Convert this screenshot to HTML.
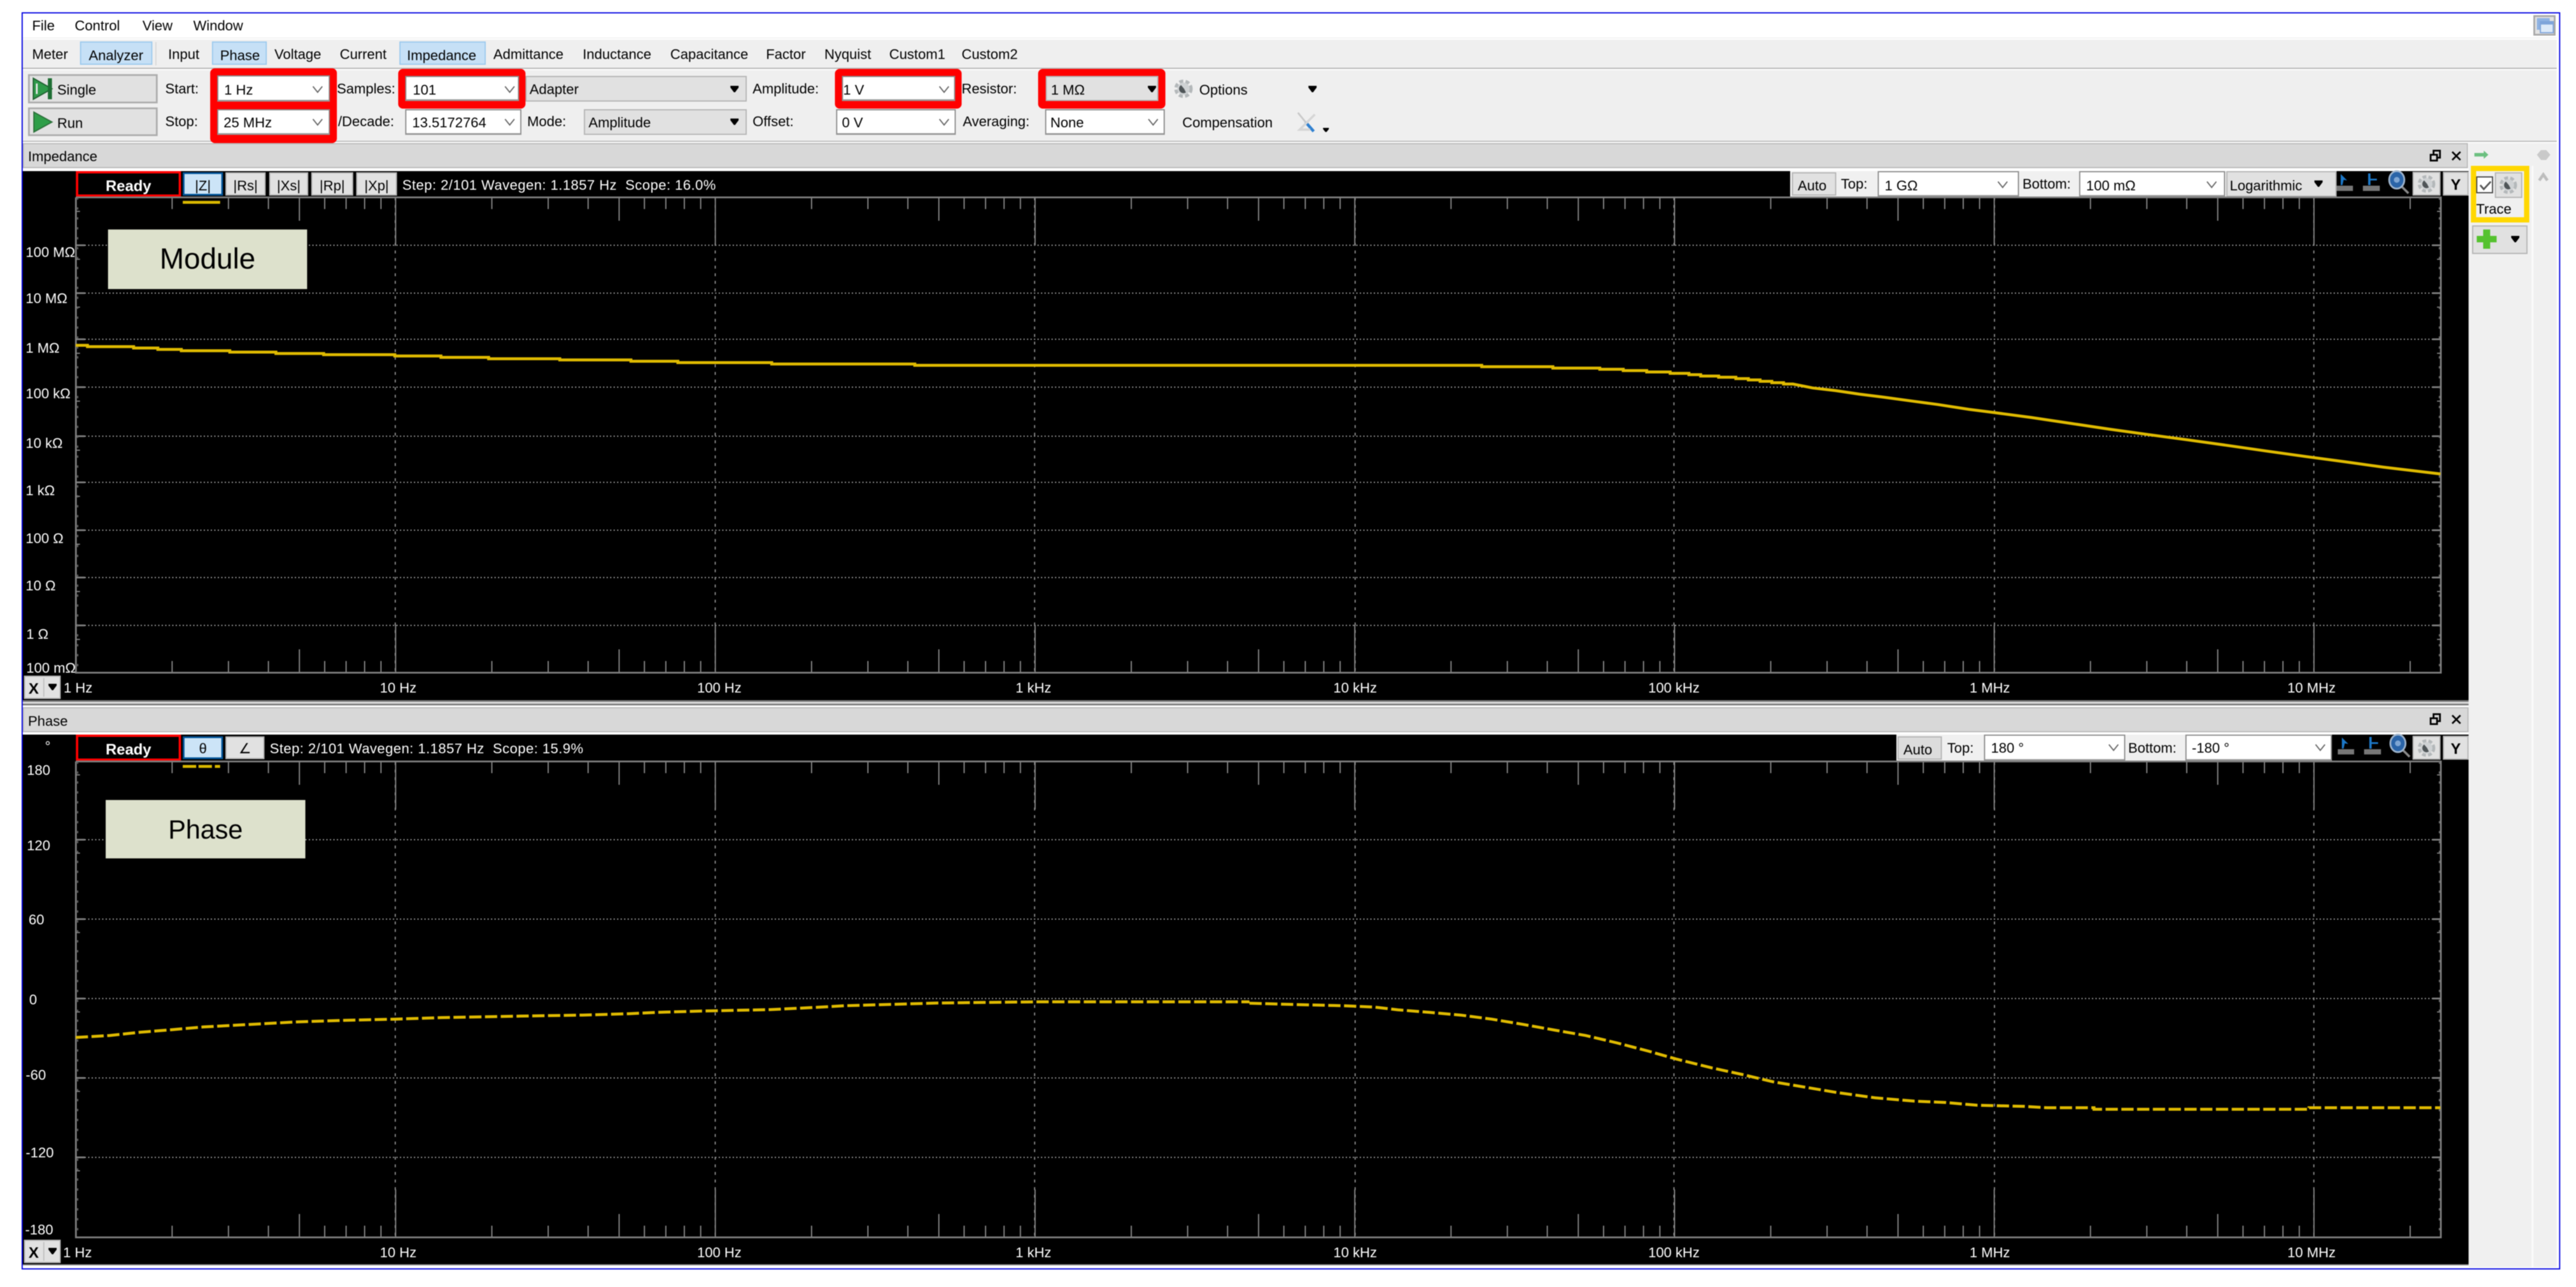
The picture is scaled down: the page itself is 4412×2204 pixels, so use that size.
<!DOCTYPE html>
<html><head><meta charset="utf-8"><title>Analyzer</title>
<style>
html,body{margin:0;padding:0;background:#fff}
#p{position:relative;width:4412px;height:2204px;overflow:hidden;background:#fff;font-family:"Liberation Sans","DejaVu Sans",sans-serif;filter:blur(.7px)}
#p div{position:absolute;box-sizing:border-box}
.t{position:absolute;white-space:pre;font:24px/30px "Liberation Sans","DejaVu Sans",sans-serif;color:#000}
.w{color:#fff}
.s{letter-spacing:.5px}
.xl{width:120px;text-align:center}
.c{background:#fff;border:2px solid #8b8b8b;border-bottom:3px solid #9a9a9a}
.d,.b{background:#e1e1e1;border:2px solid #b4b4b4}
.b3{background:#e1e1e1;border:3px solid #adadad}
.on{background:#c6e0f6;border:2px solid #9bc9ee}
.red{background:#f00;border-radius:8px}
svg{position:absolute;left:0;top:0}
</style></head><body><div id="p">

<!-- frame -->
<div style="left:37px;top:21px;width:4348px;height:2153px;border:2px solid #0000e0"></div>
<div style="left:39px;top:64px;width:4340px;height:2px;background:#f2f2f2"></div>
<div style="left:39px;top:68px;width:4340px;height:48px;background:#efefef"></div>
<div style="left:39px;top:116px;width:4340px;height:2px;background:#b5b5b5"></div>
<div style="left:39px;top:120px;width:4340px;height:121px;background:#efefef"></div>
<div style="left:39px;top:241px;width:4340px;height:2px;background:#bbb"></div>

<!-- right panel -->
<div style="left:4228px;top:245px;width:151px;height:1925px;background:#f0f0f0"></div>
<div style="left:4336px;top:284px;width:3px;height:1886px;background:#fafafa"></div>

<!-- dock titles -->
<div style="left:39px;top:245px;width:4188px;height:43px;background:#d8d8d8;border:2px solid #bababa"></div>
<div style="left:39px;top:1211px;width:4189px;height:43px;background:#d8d8d8;border:2px solid #bababa"></div>

<!-- black plots -->
<div style="left:39px;top:293px;width:4189px;height:906px;background:#000"></div>
<div style="left:39px;top:1199px;width:4189px;height:9px;background:#e0e0e0;border-top:3px solid #7b7b7b;border-bottom:3px solid #7b7b7b"></div>
<div style="left:39px;top:1258px;width:4189px;height:907px;background:#000"></div>
<div style="left:39px;top:2165px;width:4189px;height:2px;background:#888"></div>

<!-- tab buttons -->
<div class="on" style="left:137px;top:71px;width:124px;height:40px"></div>
<div style="left:266px;top:72px;width:2px;height:40px;background:#d8d8d8"></div>
<div class="on" style="left:363px;top:71px;width:94px;height:40px"></div>
<div class="on" style="left:684px;top:71px;width:148px;height:40px"></div>

<!-- toolbar controls -->
<div class="b3" style="left:48px;top:127px;width:222px;height:50px"></div>
<div class="b3" style="left:48px;top:184px;width:222px;height:49px"></div>
<div class="red" style="left:360px;top:117px;width:217px;height:128px"></div>
<div class="red" style="left:682px;top:118px;width:218px;height:68px"></div>
<div class="red" style="left:1430px;top:118px;width:217px;height:68px"></div>
<div class="red" style="left:1778px;top:118px;width:218px;height:68px"></div>
<div class="c" style="left:372px;top:129px;width:193px;height:45px"></div>
<div class="c" style="left:372px;top:187px;width:193px;height:44px"></div>
<div class="c" style="left:694px;top:130px;width:195px;height:43px"></div>
<div class="c" style="left:694px;top:187px;width:199px;height:44px"></div>
<div class="d" style="left:900px;top:130px;width:379px;height:44px"></div>
<div class="d" style="left:1000px;top:187px;width:279px;height:44px"></div>
<div class="c" style="left:1442px;top:130px;width:194px;height:43px"></div>
<div class="c" style="left:1432px;top:187px;width:205px;height:44px"></div>
<div class="d" style="left:1791px;top:130px;width:193px;height:43px"></div>
<div class="c" style="left:1790px;top:187px;width:205px;height:44px"></div>

<!-- plot 1 toolbar -->
<div style="left:130px;top:293px;width:180px;height:44px;background:#000;border:4px solid #f00"></div>
<div style="left:313px;top:295px;width:69px;height:40px;background:#cce4f7;border:3px solid #005499"></div>
<div class="b" style="left:386px;top:295px;width:69px;height:40px"></div>
<div class="b" style="left:461px;top:295px;width:67px;height:40px"></div>
<div class="b" style="left:533px;top:295px;width:72px;height:40px"></div>
<div class="b" style="left:610px;top:295px;width:70px;height:40px"></div>
<div style="left:3066px;top:293px;width:936px;height:44px;background:#f0f0f0"></div>
<div class="b" style="left:3069px;top:295px;width:76px;height:40px"></div>
<div class="c" style="left:3216px;top:293px;width:242px;height:44px"></div>
<div class="c" style="left:3561px;top:293px;width:250px;height:44px"></div>
<div class="d" style="left:3813px;top:293px;width:189px;height:44px"></div>
<div class="b" style="left:4132px;top:294px;width:48px;height:41px"></div>
<div class="b" style="left:4184px;top:294px;width:44px;height:41px"></div>

<!-- plot 2 toolbar -->
<div style="left:130px;top:1258px;width:180px;height:45px;background:#000;border:4px solid #f00"></div>
<div style="left:313px;top:1261px;width:69px;height:39px;background:#cce4f7;border:3px solid #005499"></div>
<div class="b" style="left:386px;top:1261px;width:67px;height:39px"></div>
<div style="left:3248px;top:1258px;width:746px;height:45px;background:#f0f0f0"></div>
<div class="b" style="left:3250px;top:1261px;width:76px;height:40px;background:#dcdcdc"></div>
<div class="c" style="left:3398px;top:1258px;width:242px;height:45px"></div>
<div class="c" style="left:3743px;top:1258px;width:251px;height:45px"></div>
<div class="b" style="left:4132px;top:1260px;width:48px;height:41px"></div>
<div class="b" style="left:4184px;top:1260px;width:44px;height:41px"></div>

<!-- X buttons -->
<div class="b" style="left:41px;top:1157px;width:63px;height:40px"></div>
<div class="b" style="left:41px;top:2123px;width:63px;height:40px"></div>

<!-- side panel boxes -->
<div style="left:4232px;top:284px;width:100px;height:97px;border:9px solid #ffd700;background:#f0f0f0"></div>
<div style="left:4241px;top:302px;width:29px;height:29px;background:#fff;border:2px solid #444"></div>
<div class="b" style="left:4273px;top:295px;width:47px;height:44px"></div>
<div class="b" style="left:4234px;top:386px;width:95px;height:49px"></div>
<div style="left:4339px;top:26px;width:38px;height:35px;background:#e2e2e2;border:3px solid #a8a8a8"></div>

<svg width="4412" height="2204" viewBox="0 0 4412 2204">
<defs>
<g id="dec"><path d="M164.8 0v20M261.3 0v20M329.7 0v20M382.8 0v40M426.1 0v20M462.8 0v20M494.5 0v20M522.5 0v20M547.6 0v82" fill="none" stroke="#8a8a8a" stroke-width="2"/></g>
<g id="ticks">
<use href="#dec" x="0"/><use href="#dec" x="547.6"/><use href="#dec" x="1095.2"/><use href="#dec" x="1642.8"/><use href="#dec" x="2190.4"/><use href="#dec" x="2738"/><use href="#dec" x="3285.6"/><use href="#dec" x="3833.2"/>
</g>
<clipPath id="c1"><rect x="130" y="330" width="4051" height="830"/></clipPath>
<clipPath id="c2"><rect x="130" y="1296" width="4051" height="830"/></clipPath>
<g id="vg"><path d="M677 0V814M1225 0V814M1772 0V814M2321 0V814M2867 0V814M3416 0V814M3963 0V814" fill="none" stroke="#8c8c8c" stroke-width="2" stroke-dasharray="5 8"/></g>
<g id="gear"><circle r="11.5" fill="none" stroke="#b4b8ba" stroke-width="7" stroke-dasharray="6 3.5"/><circle r="10" fill="#cfd2d4"/><path d="M-4 -6 A7 7 0 0 0 4 6 L1 0 Z" fill="#4f5558"/></g>
<path id="arw" d="M-7 -5H7V-2L1 6H-1L-7 -2Z" fill="#000"/>
<path id="chv" d="M-8 -5L0 5L8 -5" fill="none" stroke="#666" stroke-width="2"/>
<g id="tool">
<rect x="4002" y="318" width="28" height="9" fill="#777"/><path d="M4009 298L4020 309L4014 308L4012 317H4009Z" fill="#1c78c8"/>
<rect x="4047" y="318" width="29" height="9" fill="#777"/><path d="M4056 297h4v9h11v3h-11v8h-4Z" fill="#1c78c8"/>
<path d="M4114 320L4125 331" stroke="#888" stroke-width="4"/><ellipse cx="4105" cy="308" rx="13" ry="15" fill="#2a64a8" stroke="#9fb4cc" stroke-width="3"/><circle cx="4105" cy="308" r="5" fill="#7fa6d4"/>
</g>
</defs>

<!-- plot 1 grid -->
<path d="M145 420H4170M145 502H4170M145 581H4170M145 663H4170M145 747H4170M145 826H4170M145 908H4170M145 989H4170M145 1071H4170" fill="none" stroke="#a6a6a6" stroke-width="2" stroke-dasharray="2 4"/>
<use href="#vg" y="338"/>
<g clip-path="url(#c1)">
<use href="#ticks" transform="translate(130 338)"/>
<use href="#ticks" transform="translate(130 1152) scale(1 -1)"/>
</g>
<path d="M130 338V1152H4180.500V338H130" fill="none" stroke="#7f7f7f" stroke-width="3"/>
<path d="M130 420h15M130 502h15M130 581h15M130 663h15M130 747h15M130 826h15M130 908h15M130 989h15M130 1071h15M4166 420h15M4166 502h15M4166 581h15M4166 663h15M4166 747h15M4166 826h15M4166 908h15M4166 989h15M4166 1071h15" stroke="#808080" stroke-width="3" fill="none"/>
<path d="M130 362h7M130 444h7M130 526h7M130 605h7M130 687h7M130 771h7M130 850h7M130 932h7M130 1013h7M130 1095h7M4174 362h7M4174 444h7M4174 526h7M4174 605h7M4174 687h7M4174 771h7M4174 850h7M4174 932h7M4174 1013h7M4174 1095h7" stroke="#808080" stroke-width="2" fill="none"/>
<path d="M133 338V1152M4178 338V1152" stroke="#666" stroke-width="2" stroke-dasharray="4 13" fill="none"/>

<!-- plot 2 grid -->
<path d="M145 1438H4170M145 1574H4170M145 1710H4170M145 1846H4170M145 1982H4170" fill="none" stroke="#a6a6a6" stroke-width="2" stroke-dasharray="2 4"/>
<use href="#vg" y="1305"/>
<g clip-path="url(#c2)">
<use href="#ticks" transform="translate(130 1304)"/>
<use href="#ticks" transform="translate(130 2119) scale(1 -1)"/>
</g>
<path d="M130 1304V2119H4180.500V1304H130" fill="none" stroke="#7f7f7f" stroke-width="3"/>
<path d="M130 1438h15M130 1574h15M130 1710h15M130 1846h15M130 1982h15M4166 1438h15M4166 1574h15M4166 1710h15M4166 1846h15M4166 1982h15" stroke="#808080" stroke-width="3" fill="none"/>
<path d="M130 1327h7M130 1461h7M130 1597h7M130 1733h7M130 1869h7M130 2005h7M4174 1327h7M4174 1461h7M4174 1597h7M4174 1733h7M4174 1869h7M4174 2005h7" stroke="#808080" stroke-width="2" fill="none"/>
<path d="M133 1304V2119M4178 1304V2119" stroke="#666" stroke-width="2" stroke-dasharray="4 13" fill="none"/>

<!-- curves -->
<g fill="none" stroke="#dfba00" stroke-width="5">
<path vector-effect="non-scaling-stroke" transform="translate(40 380) scale(1.3393 .33333)" d="M67 634H82V641H141V648H172V655H202V662H264V669H323V676H384V682H475V689H534V696H595V703H686V709H777V716H837V723H957V730H1140V737H1568"/>
<path vector-effect="non-scaling-stroke" transform="translate(2140 560) scale(1.3393 .33333)" d="M0 197H297V204H388V211H448V217H478V224H508V231H538V238H562V245H577V252H600V258H622V265H638V272H653V279H668V286H683V293H695L720 313L750 327L780 345L810 360L850 382L880 398L920 423L953 440L1000 465L1050 495L1100 525L1150 553L1200 580L1250 608L1300 637L1350 665L1400 692L1450 720L1523 755"/>
<path vector-effect="non-scaling-stroke" stroke-dasharray="21 6" transform="translate(40 1660) scale(1.3393 .33333)" d="M67 350L110 340L150 323L190 310L230 296L290 283L350 270L410 262L475 256L535 248L625 241L715 235L775 228L810 221L870 214L955 207L1020 194L1050 187L1110 180L1170 173L1293 167L1568 167"/>
<path vector-effect="non-scaling-stroke" stroke-dasharray="21 6" transform="translate(2140 1660) scale(1.3393 .33333)" d="M0 174L60 181L120 187L160 194L190 208L230 221L270 235L310 256L350 283L390 312L430 340L470 378L510 420L545 460L590 505L630 540L670 578L710 605L750 632L800 660L850 677L890 684L930 698L990 704L1020 711L1080 711V719H1355V711H1523"/>
</g>
<rect x="313" y="344" width="64" height="5" fill="#d9b800"/>
<path d="M313 1312.500h23M340 1312.500h23M368 1312.500h9" stroke="#d9b800" stroke-width="5"/>

<!-- toolbar icons -->
<path d="M57 134L89 152L57 170Z" fill="#2f9a4a" stroke="#1f5f30" stroke-width="2"/><rect x="82" y="134" width="7" height="36" fill="#1e6e33"/><path d="M63 143v18" stroke="#e8e8e8" stroke-width="3"/>
<path d="M58 192L89 209L58 226Z" fill="#2e9e48" stroke="#2b6f39" stroke-width="2"/>
<use href="#chv" x="544" y="153"/><use href="#chv" x="544" y="209"/><use href="#chv" x="873" y="153"/><use href="#chv" x="873" y="209"/>
<use href="#chv" x="1617" y="153"/><use href="#chv" x="1617" y="209"/><use href="#chv" x="1975" y="209"/>
<use href="#arw" x="1258" y="152"/><use href="#arw" x="1258" y="208"/><use href="#arw" x="1973" y="152"/><use href="#arw" x="2248" y="152"/>
<use href="#gear" transform="translate(2027 152) scale(1.05)"/>
<path d="M2223 193L2249 225" stroke="#c9c9c9" stroke-width="3"/><path d="M2236 209L2250 225" stroke="#2f80d0" stroke-width="5"/><path d="M2252 196L2226 222H2244" fill="none" stroke="#d6d6d6" stroke-width="4"/>
<path d="M2266 219H2276V221L2272 226H2270L2266 221Z" fill="#000"/>

<!-- plot toolbar icons -->
<use href="#tool"/><use href="#tool" x="2" y="965"/>
<use href="#gear" x="4156" y="315"/><use href="#gear" x="4156" y="1281"/>
<use href="#gear" x="4296" y="317"/>
<use href="#chv" x="3430" y="316"/><use href="#chv" x="3788" y="316"/><use href="#arw" x="3971" y="314"/>
<use href="#chv" x="3620" y="1280"/><use href="#chv" x="3974" y="1280"/>
<use href="#arw" x="90" y="1176"/><use href="#arw" x="90" y="2142"/>
<path d="M75 1161V1193M75 2127V2159" stroke="#c0c0c0" stroke-width="2"/>

<!-- dock icons -->
<g id="dk" fill="none" stroke="#000" stroke-width="3"><rect x="4163" y="265" width="11" height="10"/><path d="M4168 265V258H4179V270H4174"/><path d="M4200 260L4214 274M4214 260L4200 274"/></g>
<use href="#dk" y="965"/>

<!-- side icons -->
<path d="M4238 262H4254V258L4262 265L4254 272V268H4238Z" fill="#6cc080"/>
<path d="M4345 265L4352 257H4361L4368 265L4361 274H4352Z" fill="#c9c9c9"/>
<path d="M4349 309L4356 299L4363 309" fill="none" stroke="#bdbdbd" stroke-width="5"/>
<path d="M4248 317L4254 324L4266 311" fill="none" stroke="#555" stroke-width="3"/>
<path d="M4253 393h12v11h11v11h-11v11h-12v-11h-11v-11h11Z" fill="#55c22f"/>
<use href="#arw" x="4308" y="409"/>
<rect x="4345" y="31" width="22" height="20" fill="#8fb2e2"/><rect x="4351" y="37" width="22" height="19" fill="#dce9f8" stroke="#7ea4da" stroke-width="2"/><rect x="4351" y="37" width="22" height="5" fill="#7ea4da"/>
</svg>

<!-- annotation boxes -->
<div style="left:185px;top:393px;width:341px;height:102px;background:#dde1cc"></div>
<div style="left:181px;top:1370px;width:342px;height:100px;background:#dde1cc"></div>
<span class="t" style="left:185px;top:418px;width:341px;text-align:center;font-size:50px;line-height:50px">Module</span>
<span class="t" style="left:181px;top:1396px;width:342px;text-align:center;font-size:45px;line-height:50px">Phase</span>

<!-- menu -->
<span class="t" style="left:55px;top:30px">File</span><span class="t" style="left:128px;top:30px">Control</span><span class="t" style="left:244px;top:30px">View</span><span class="t" style="left:331px;top:30px">Window</span>
<!-- tabs -->
<span class="t" style="left:55px;top:79px">Meter</span><span class="t" style="left:152px;top:81px">Analyzer</span><span class="t" style="left:288px;top:79px">Input</span><span class="t" style="left:377px;top:81px">Phase</span><span class="t" style="left:470px;top:79px">Voltage</span><span class="t" style="left:582px;top:79px">Current</span><span class="t" style="left:697px;top:81px">Impedance</span><span class="t" style="left:845px;top:79px">Admittance</span><span class="t" style="left:998px;top:79px">Inductance</span><span class="t" style="left:1148px;top:79px">Capacitance</span><span class="t" style="left:1312px;top:79px">Factor</span><span class="t" style="left:1412px;top:79px">Nyquist</span><span class="t" style="left:1523px;top:79px">Custom1</span><span class="t" style="left:1647px;top:79px">Custom2</span>
<!-- toolbar text -->
<span class="t" style="left:98px;top:140px">Single</span><span class="t" style="left:98px;top:197px">Run</span>
<span class="t" style="left:283px;top:138px">Start:</span><span class="t" style="left:283px;top:194px">Stop:</span>
<span class="t" style="left:384px;top:140px">1 Hz</span><span class="t" style="left:383px;top:196px">25 MHz</span>
<span class="t" style="left:577px;top:138px">Samples:</span><span class="t" style="left:579px;top:194px">/Decade:</span>
<span class="t" style="left:707px;top:140px">101</span><span class="t" style="left:706px;top:196px">13.5172764</span>
<span class="t" style="left:907px;top:139px">Adapter</span><span class="t" style="left:903px;top:194px">Mode:</span><span class="t" style="left:1008px;top:196px">Amplitude</span>
<span class="t" style="left:1289px;top:138px">Amplitude:</span><span class="t" style="left:1289px;top:194px">Offset:</span>
<span class="t" style="left:1444px;top:140px">1 V</span><span class="t" style="left:1442px;top:196px">0 V</span>
<span class="t" style="left:1647px;top:138px">Resistor:</span><span class="t" style="left:1649px;top:194px">Averaging:</span>
<span class="t" style="left:1800px;top:140px">1 MΩ</span><span class="t" style="left:1799px;top:196px">None</span>
<span class="t" style="left:2054px;top:140px">Options</span><span class="t" style="left:2025px;top:196px">Compensation</span>
<!-- titles -->
<span class="t" style="left:48px;top:254px">Impedance</span><span class="t" style="left:48px;top:1221px">Phase</span>
<!-- plot 1 bar -->
<span class="t w" style="left:130px;top:303px;width:180px;text-align:center;font-weight:bold;font-size:26px">Ready</span>
<span class="t" style="left:313px;top:304px;width:69px;text-align:center">|Z|</span><span class="t" style="left:386px;top:304px;width:69px;text-align:center">|Rs|</span><span class="t" style="left:461px;top:304px;width:67px;text-align:center">|Xs|</span><span class="t" style="left:533px;top:304px;width:72px;text-align:center">|Rp|</span><span class="t" style="left:610px;top:304px;width:70px;text-align:center">|Xp|</span>
<span class="t w s" style="left:689px;top:303px">Step: 2/101 Wavegen: 1.1857 Hz  Scope: 16.0%</span>
<span class="t" style="left:3079px;top:304px">Auto</span><span class="t" style="left:3153px;top:301px">Top:</span><span class="t" style="left:3228px;top:304px">1 GΩ</span><span class="t" style="left:3464px;top:301px">Bottom:</span><span class="t" style="left:3573px;top:304px">100 mΩ</span><span class="t" style="left:3819px;top:304px">Logarithmic</span>
<span class="t" style="left:4184px;top:301px;width:44px;text-align:center;font-weight:bold;font-size:26px">Y</span>
<!-- plot 2 bar -->
<span class="t w" style="left:130px;top:1268px;width:180px;text-align:center;font-weight:bold;font-size:26px">Ready</span>
<span class="t" style="left:313px;top:1268px;width:69px;text-align:center">θ</span><span class="t" style="left:386px;top:1268px;width:67px;text-align:center">∠</span>
<span class="t w s" style="left:462px;top:1268px">Step: 2/101 Wavegen: 1.1857 Hz  Scope: 15.9%</span>
<span class="t w" style="left:77px;top:1264px">°</span>
<span class="t" style="left:3260px;top:1270px">Auto</span><span class="t" style="left:3335px;top:1267px">Top:</span><span class="t" style="left:3410px;top:1267px">180 °</span><span class="t" style="left:3645px;top:1267px">Bottom:</span><span class="t" style="left:3754px;top:1267px">-180 °</span>
<span class="t" style="left:4184px;top:1267px;width:44px;text-align:center;font-weight:bold;font-size:26px">Y</span>
<!-- y labels plot 1 -->
<span class="t w" style="left:44px;top:418px">100 MΩ</span><span class="t w" style="left:44px;top:497px">10 MΩ</span><span class="t w" style="left:44px;top:582px">1 MΩ</span><span class="t w" style="left:44px;top:660px">100 kΩ</span><span class="t w" style="left:44px;top:745px">10 kΩ</span><span class="t w" style="left:44px;top:826px">1 kΩ</span><span class="t w" style="left:44px;top:908px">100 Ω</span><span class="t w" style="left:44px;top:989px">10 Ω</span><span class="t w" style="left:45px;top:1072px">1 Ω</span><span class="t w" style="left:45px;top:1130px">100 mΩ</span>
<!-- y labels plot 2 -->
<span class="t w" style="left:46px;top:1305px">180</span><span class="t w" style="left:46px;top:1434px">120</span><span class="t w" style="left:49px;top:1561px">60</span><span class="t w" style="left:50px;top:1698px">0</span><span class="t w" style="left:44px;top:1827px">-60</span><span class="t w" style="left:44px;top:1960px">-120</span><span class="t w" style="left:43px;top:2092px">-180</span>
<!-- x labels -->
<span class="t" style="left:49px;top:1164px;font-weight:bold;font-size:26px">X</span><span class="t" style="left:49px;top:2130px;font-weight:bold;font-size:26px">X</span>
<span class="t w" style="left:109px;top:1164px">1 Hz</span><span class="t w xl" style="left:622px;top:1164px">10 Hz</span><span class="t w xl" style="left:1172px;top:1164px">100 Hz</span><span class="t w xl" style="left:1710px;top:1164px">1 kHz</span><span class="t w xl" style="left:2261px;top:1164px">10 kHz</span><span class="t w xl" style="left:2807px;top:1164px">100 kHz</span><span class="t w xl" style="left:3348px;top:1164px">1 MHz</span><span class="t w xl" style="left:3899px;top:1164px">10 MHz</span>
<span class="t w" style="left:108px;top:2131px">1 Hz</span><span class="t w xl" style="left:622px;top:2131px">10 Hz</span><span class="t w xl" style="left:1172px;top:2131px">100 Hz</span><span class="t w xl" style="left:1710px;top:2131px">1 kHz</span><span class="t w xl" style="left:2261px;top:2131px">10 kHz</span><span class="t w xl" style="left:2807px;top:2131px">100 kHz</span><span class="t w xl" style="left:3348px;top:2131px">1 MHz</span><span class="t w xl" style="left:3899px;top:2131px">10 MHz</span>
<span class="t" style="left:4241px;top:344px">Trace</span>
</div></body></html>
